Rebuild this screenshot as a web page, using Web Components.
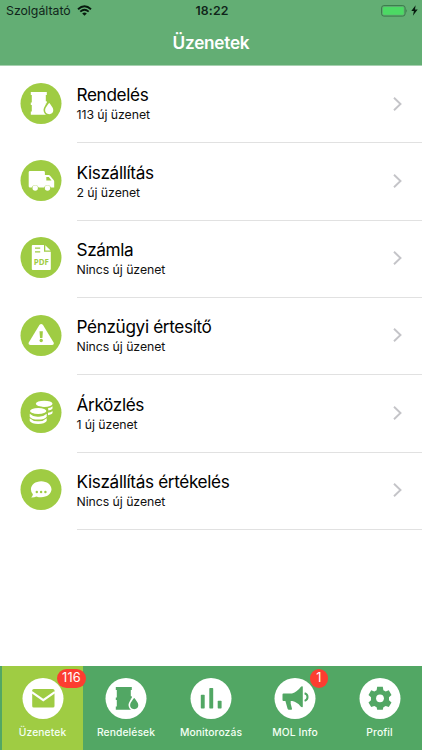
<!DOCTYPE html>
<html lang="hu"><head><meta charset="utf-8"><title>Üzenetek</title>
<style>
html,body{margin:0;height:100%;background:#fff}
body{font-family:Inter,"Liberation Sans",sans-serif;overflow:hidden}
</style></head><body>
<messages-app></messages-app>
<script>
const barrel = `<path d="M10.300 9h16v2.900h-1v6.300h1v2.200h-1v8h1v3.300h-16v-3.300h1v-6.400h-1v-2.400h1v-7.700h-1z"/><path class="cut" stroke-width="1.600" d="M28.700 18.300c2 3.200 4.900 5.500 4.900 8.800a4.900 4.900 0 0 1-9.800 0c0-3.300 2.900-5.600 4.900-8.800z"/>`;
const icons = {
  barrel,
  truck: `<path d="M9.500 11h13.600a1.300 1.300 0 0 1 1.300 1.300V15h3.800q.8 0 1.400.7l3.500 4.300q.6.700.6 1.600v6h-3.200a3.700 3.700 0 0 0-7 0h-5.300a3.700 3.700 0 0 0-7 0H9.500a1.300 1.300 0 0 1-1.300-1.300v-14A1.300 1.300 0 0 1 9.500 11z"/><path class="hole" d="M25.800 17h2.500l2.700 3.500h-5.200z"/><circle cx="14.700" cy="28" r="2.700"/><circle cx="27" cy="28" r="2.700"/>`,
  pdf: `<path d="M12.300 8h11.200v6.800h6.800V32q0 1-1 1h-17q-1 0-1-1V9q0-1 1-1zM24.800 8.200l5.300 5.300h-5.300z"/><path class="line" d="M14.500 11.200h5.200M14.500 14.900h5.200" stroke-width="1.300"/><text class="hole" x="13.200" y="28.300" font-size="8.800" font-weight="700" font-family="Open Sans" textLength="15.200" lengthAdjust="spacingAndGlyphs">PDF</text>`,
  warning: `<path d="M18.900 10.100q1.800-2 3.600 0l10.600 17.300q.9 2.400-1.600 2.600H10q-2.600-.2-1.700-2.600z"/><path class="hole" d="M19 16.200h3.400l-.5 6.800h-2.400z"/><circle class="hole" cx="20.700" cy="25.500" r="1.700"/>`,
  coins: `<ellipse cx="23.700" cy="11.800" rx="8.300" ry="3.100"/><path d="M27.500 16.200q3-.6 4.500-1.900v2.100q-.6 1.600-4.100 2.200zM27.500 20.800q3-.6 4.500-1.900v2.100q-.6 1.600-4.500 2.200z"/><ellipse class="cut" stroke-width="1.400" cx="17.700" cy="19" rx="8.900" ry="3.700"/><path d="M9.200 21.700q3.500 3.300 8.500 3 5 .3 8.500-3v3q-2 2.900-8.500 2.900t-8.500-2.900zM9.200 26.300q3.500 3.300 8.500 3 5 .3 8.500-3V29q-2 3-8.500 3T9.200 29z"/>`,
  chat: `<path d="M20.700 12.300c5.700 0 10.300 3.600 10.300 8s-4.600 8-10.300 8q-2.600 0-4.800-.9-2.100 1.100-5.100 1 1.600-1.700 1.600-3.200-2-2.100-2-4.900c0-4.400 4.600-8 10.300-8z"/><g class="hole"><circle cx="16.300" cy="23" r="1.200"/><circle cx="20.600" cy="23" r="1.200"/><circle cx="24.900" cy="23" r="1.200"/></g>`,
  mail: `<rect x="9.700" y="11" width="22.300" height="18.500" rx="1.600"/><path class="line" d="M9.300 14.200l11.500 8 11.500-8" stroke-width="2.200"/>`,
  bars: `<rect x="10.300" y="16.700" width="3.900" height="13.800" rx=".7"/><rect x="18.800" y="10" width="3.900" height="20.500" rx=".7"/><rect x="27.200" y="22.700" width="3.900" height="7.800" rx=".7"/>`,
  megaphone: `<path d="M9 15.500h8.500q5.300-1.700 8.500-6.200.8-1 1.700-1 .6 0 .6.800v19.300q0 .8-.7.800-.8 0-1.700-1-3-4-8.100-5.200h-1.600v2.800l1.300 5q.2 1-.8 1h-2.300q-1 0-1.300-1l-2.200-7.700H9q-1 0-1-1v-5.600q0-1 1-1z"/><path class="arc" d="M30.100 15.200c3.900 1.200 3.900 6.500 0 7.700" fill="none" stroke-width="2"/>`,
  gear: `<path d="M17.700 9h5.600l.6 3.500 2.300 1.300 3.100-1.200 2.700 4.700-2.500 2.200v3l2.500 2.200-2.700 4.700-3.100-1.200-2.300 1.300-.6 2.500h-5.600l-.6-2.500-2.300-1.300-3.100 1.200L9 24.700l2.500-2.200v-3L9 17.300l2.700-4.700 3.100 1.200 2.300-1.300z" transform="translate(0 -.3)"/><circle class="hole" cx="20.500" cy="20.300" r="3.900"/>`
};
class RoundIcon extends HTMLElement{
  connectedCallback(){
    this.attachShadow({mode:'open'}).innerHTML=`<style>
    :host{display:block;width:41px;height:41px;flex:none}
    svg{display:block;overflow:visible;fill:var(--glyph,#fff)}.disc,.hole{fill:var(--disc,#9fcc43)}.cut,.line{stroke:var(--disc,#9fcc43)}.line{fill:none}.arc{stroke:var(--glyph,#fff)}
    </style><svg width="41" height="41" viewBox="-.5 0 41 41"><circle class="disc" cx="20.500" cy="20.500" r="20.500"/>${icons[this.getAttribute('name')]}</svg>`;
  }
}
class StatusBar extends HTMLElement{
  connectedCallback(){
    this.attachShadow({mode:'open'}).innerHTML=`<style>
    :host{display:grid;grid-template-columns:1fr auto 1fr;align-items:center;height:21px;padding:0 4px 0 6px;color:#10251a;font-size:12.300px}
    .left,.right{display:flex;align-items:center}.left{gap:6px;letter-spacing:0}.right{justify-content:flex-end;gap:3px}.time{font-weight:600;letter-spacing:.15px;font-size:12.300px}
    svg{display:block}</style>
    <div class="left"><span>Szolgáltató</span><svg width="15" height="11" viewBox="0 0 15 11" fill="none" stroke="#071a0e" stroke-width="1.900"><path d="M1 4.200q6.500-5.800 13 0M3.300 6.600q4.200-3.600 8.400 0"/><path d="M7.500 10.700L5.200 8.500q2.300-1.800 4.600 0z" fill="#071a0e" stroke="none"/></svg></div>
    <span class="time">18:22</span>
    <div class="right"><svg width="27" height="12" viewBox="0 0 27 12"><rect x=".6" y=".6" width="23.500" height="10.500" rx="2.300" fill="none" stroke="#397a49"/><rect x="2" y="2" width="20.700" height="7.700" rx="1.200" fill="#4cd964"/><path d="M25.200 4q1.500 1.800 0 3.700z" fill="#397a49"/></svg>
    <svg width="7" height="11" viewBox="0 0 7 11"><path d="M4.600.3L.3 6h2.600l-1 4.700 4.800-6.300H4z" fill="#071a0e"/></svg></div>`;
  }
}
class MessageRow extends HTMLElement{
  connectedCallback(){
    this.attachShadow({mode:'open'}).innerHTML=`<style>
    :host{display:grid;grid-template-columns:56.500px 1fr;height:77.340px;padding-left:20px;box-sizing:border-box}
    round-icon{margin-top:16.700px}
    .body{display:flex;justify-content:space-between;border-bottom:1px solid #e1e1e1;padding-right:20px}
    .title{font-size:17.200px;line-height:22px;margin-top:18.200px;color:#000;letter-spacing:-.36px}
    .detail{font-size:12.300px;line-height:16px;margin-top:1px;color:#111;letter-spacing:-.06px}
    svg{display:block;margin-top:30.500px}</style>
    <round-icon name="${this.getAttribute('icon')}"></round-icon>
    <div class="body"><div><div class="title"><slot></slot></div><div class="detail"><slot name="detail"></slot></div></div>
    <svg width="9" height="14" viewBox="0 0 9 14" fill="none" stroke="#c4c4c8" stroke-width="1.900"><path d="M1 .8L7.500 7 1 13.200"/></svg></div>`;
  }
}
class TabItem extends HTMLElement{
  connectedCallback(){
    const badge=this.getAttribute('badge');
    this.attachShadow({mode:'open'}).innerHTML=`<style>
    :host{display:flex;flex-direction:column;align-items:center;position:relative;color:#f4fff4;--disc:#fff;--glyph:#52a764}
    :host([active]){background:#9fcc43;--glyph:#9fcc43}
    round-icon{margin-top:11.700px;margin-left:-1px}
    .label{font-size:10.300px;line-height:14px;font-weight:500;margin-top:6.500px;letter-spacing:.1px;white-space:nowrap}
    .badge{position:absolute;top:3px;left:calc(50% + 14.700px);min-width:18.500px;height:18.500px;box-sizing:border-box;border-radius:10px;background:#fc3d30;color:#fff;font-size:12.800px;line-height:18.500px;text-align:center;padding:0 4.800px;letter-spacing:.2px;z-index:1}
    </style><round-icon name="${this.getAttribute('icon')}"></round-icon><span class="label"><slot></slot></span>${badge?`<span class="badge">${badge}</span>`:''}`;
  }
}
class MessagesApp extends HTMLElement{
  connectedCallback(){
    this.attachShadow({mode:'open'}).innerHTML=`<style>
    :host{display:flex;flex-direction:column;width:422px;height:750px;background:#fff}
    header{height:66px;box-sizing:border-box;background:#63ae74;border-bottom:1px solid #a7d0b0;flex:none}
    h1{margin:0;text-align:center;color:#fff;font-size:17.200px;font-weight:600;line-height:44px;letter-spacing:-.25px}
    main{flex:1}
    nav{height:84px;display:grid;grid-template-columns:81px 86px 84px 84px 85px;background:#52a764;padding-left:2px;flex:none}
    </style>
    <header><status-bar></status-bar><h1>Üzenetek</h1></header>
    <main>
    <message-row icon="barrel">Rendelés<span slot="detail">113 új üzenet</span></message-row>
    <message-row icon="truck">Kiszállítás<span slot="detail">2 új üzenet</span></message-row>
    <message-row icon="pdf">Számla<span slot="detail">Nincs új üzenet</span></message-row>
    <message-row icon="warning">Pénzügyi értesítő<span slot="detail">Nincs új üzenet</span></message-row>
    <message-row icon="coins">Árközlés<span slot="detail">1 új üzenet</span></message-row>
    <message-row icon="chat">Kiszállítás értékelés<span slot="detail">Nincs új üzenet</span></message-row>
    </main>
    <nav><tab-item icon="mail" badge="116" active>Üzenetek</tab-item><tab-item icon="barrel">Rendelések</tab-item><tab-item icon="bars">Monitorozás</tab-item><tab-item icon="megaphone" badge="1">MOL Info</tab-item><tab-item icon="gear">Profil</tab-item></nav>`;
  }
}
customElements.define('round-icon',RoundIcon);
customElements.define('status-bar',StatusBar);
customElements.define('message-row',MessageRow);
customElements.define('tab-item',TabItem);
customElements.define('messages-app',MessagesApp);
</script></body></html>
